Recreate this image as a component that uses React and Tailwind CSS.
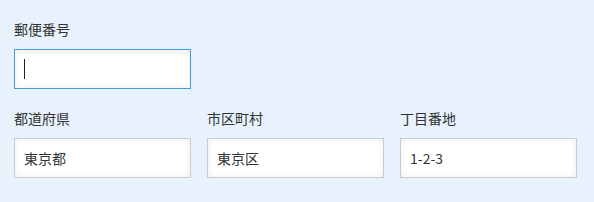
import React from "react";

const font = { fontFamily: '"Noto Sans CJK JP", "Noto Sans", sans-serif' };

function Field({ label, value, focused }) {
  return (
    <div className="flex flex-col w-[177px]">
      <div className="text-[14px] leading-[20px] text-[#333333] h-[20px]">{label}</div>
      <div
        className={
          "mt-[10px] h-[40px] w-[177px] bg-white flex items-center px-[9px] text-[14px] text-[#333333] shadow-[inset_0_0_6px_rgba(0,0,0,0.08)] border " +
          (focused ? "border-[#3d9de0]" : "border-[#cccccc]")
        }
      >
        {focused ? <span className="block w-[1px] h-[20px] bg-[#222222]" /> : value}
      </div>
    </div>
  );
}

export default function App() {
  return (
    <div className="w-[594px] h-[202px] bg-[#e8f2fc] pl-[14px] pt-[19px]" style={font}>
      <Field label="郵便番号" focused />
      <div className="flex gap-[16px] mt-[19px]">
        <Field label="都道府県" value="東京都" />
        <Field label="市区町村" value="東京区" />
        <Field label="丁目番地" value="1-2-3" />
      </div>
    </div>
  );
}
